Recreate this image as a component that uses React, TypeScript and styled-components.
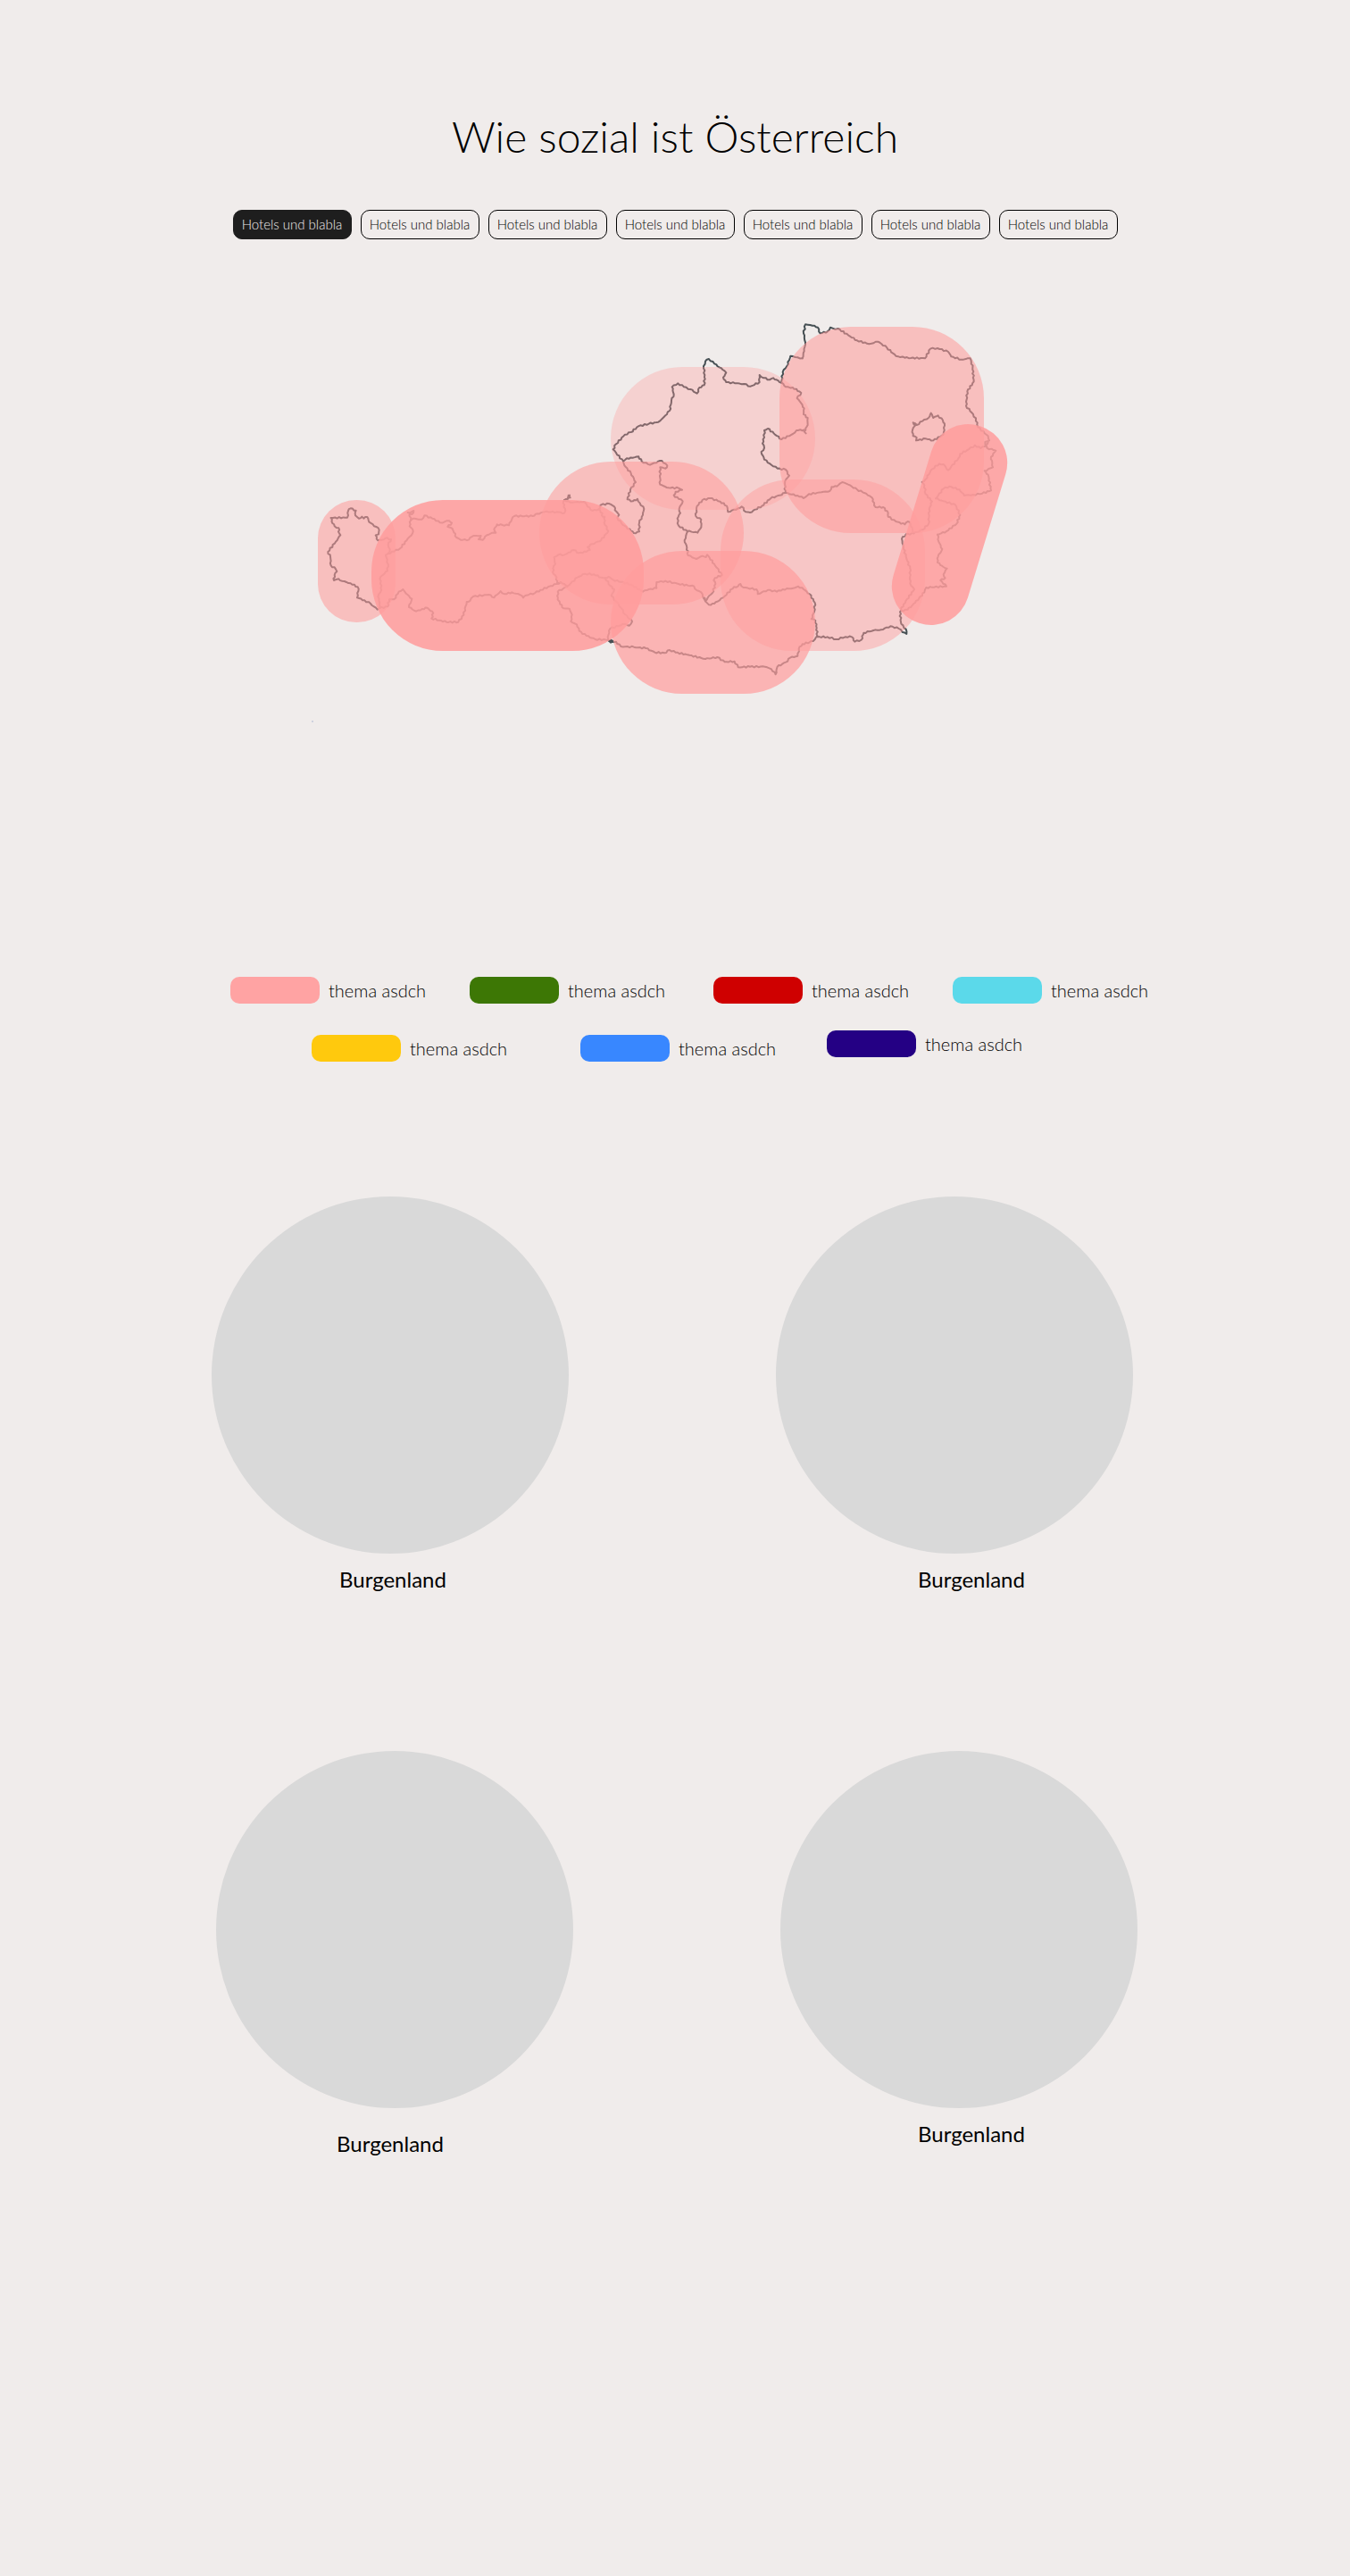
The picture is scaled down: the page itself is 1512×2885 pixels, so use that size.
import React, { useState } from "react";
import styled, { createGlobalStyle } from "styled-components";

const GlobalStyle = createGlobalStyle`
  *, *::before, *::after { box-sizing: border-box; }
  body {
    margin: 0;
    background: #f0eceb;
    color: #000;
    font-family: Lato, "Open Sans", sans-serif;
  }
`;

const Page = styled.main`
  display: flex;
  flex-direction: column;
  align-items: center;
  padding: 125px 24px 460px;
`;

const Title = styled.h1`
  margin: 0 0 54px;
  font-size: 48px;
  line-height: 56px;
  font-weight: 300;
  text-align: center;
`;

const Filters = styled.nav`
  display: flex;
  flex-wrap: wrap;
  justify-content: center;
  gap: 10px;
`;

const FilterButton = styled.button<{ $active: boolean }>`
  width: 133px;
  height: 33px;
  padding: 0 0 2px;
  border: 1px solid ${(p) => (p.$active ? "#1e1e1e" : "#000")};
  border-radius: 10px;
  background: ${(p) => (p.$active ? "#1e1e1e" : "transparent")};
  color: ${(p) => (p.$active ? "#f0eceb" : "#000")};
  font-family: inherit;
  font-size: 15px;
  font-weight: 300;
  line-height: 20px;
  white-space: nowrap;
  cursor: pointer;
`;

const MapFigure = styled.figure`
  width: 100%;
  max-width: 816px;
  margin: 92px 0 282px;

  svg {
    display: block;
    width: 100%;
    height: auto;
  }
`;

const Legend = styled.section`
  display: flex;
  flex-direction: column;
  gap: 30px;
`;

const LegendRow = styled.ul<{ $before?: number; $after?: number }>`
  display: flex;
  justify-content: center;
  align-items: flex-start;
  margin: 0;
  padding: 0 ${(p) => p.$after ?? 0}px 0 ${(p) => p.$before ?? 0}px;
  list-style: none;
`;

const LegendItem = styled.li<{ $gap: number; $drop: number }>`
  display: flex;
  align-items: center;
  gap: 10px;
  width: 218px;
  margin: ${(p) => p.$drop}px 0 0 ${(p) => p.$gap}px;
  font-size: 20px;
  font-weight: 300;
  line-height: 28px;
  white-space: nowrap;
`;

const Swatch = styled.span<{ $color: string }>`
  flex: none;
  width: 100px;
  height: 30px;
  border-radius: 10px;
  background: ${(p) => p.$color};
`;

const Charts = styled.section`
  display: flex;
  flex-direction: column;
  gap: 179px;
  margin-top: 151px;
`;

const ChartRow = styled.div<{ $before?: number; $after?: number }>`
  display: flex;
  justify-content: center;
  align-items: flex-start;
  gap: 232px;
  height: 442px;
  padding: 0 ${(p) => p.$after ?? 0}px 0 ${(p) => p.$before ?? 0}px;
`;

const Chart = styled.figure`
  width: 400px;
  margin: 0;
`;

const Disc = styled.div`
  aspect-ratio: 1;
  border-radius: 50%;
  background: #d9d9d9;
`;

const ChartName = styled.figcaption<{ $before: number; $after: number; $top: number }>`
  padding: ${(p) => p.$top}px ${(p) => p.$after}px 0 ${(p) => p.$before}px;
  font-size: 24px;
  line-height: 28px;
  text-align: center;
`;

const filters = Array.from({ length: 7 }, () => "Hotels und blabla");

const legend = [
  {
    before: 31,
    after: 0,
    items: [
      { color: "#ffa3a3", gap: 0, drop: 0 },
      { color: "#3d7705", gap: 50, drop: 0 },
      { color: "#cf0000", gap: 55, drop: 0 },
      { color: "#5bd9ea", gap: 50, drop: 0 },
    ],
  },
  {
    before: 0,
    after: 19,
    items: [
      { color: "#ffc90d", gap: 0, drop: 5 },
      { color: "#3887ff", gap: 83, drop: 5 },
      { color: "#240084", gap: 58, drop: 0 },
    ],
  },
];

const charts = [
  {
    before: 0,
    after: 6,
    items: [
      { name: "Burgenland", before: 6, after: 0, top: 15 },
      { name: "Burgenland", before: 38, after: 0, top: 15 },
    ],
  },
  {
    before: 4,
    after: 0,
    items: [
      { name: "Burgenland", before: 0, after: 10, top: 26 },
      { name: "Burgenland", before: 28, after: 0, top: 15 },
    ],
  },
];

/* Border lines, grouped by map sheet; each sheet is drawn at three times map scale. */
const sheets = [
  {
    x: 340,
    y: 540,
    lines: [
      "92,120 147,119 150,96 158,88 176,95 174,112 186,122 196,116 202,122 214,117 220,134 244,150 254,160 252,175 242,178 250,196 262,194 275,188 294,192 284,210 290,225 284,240 276,245 284,275 282,298 266,312 256,325 262,348 258,370 250,385 256,405 256,423",
      "92,120 97,138 104,148 118,154 120,172 124,178 108,200 82,234 90,250 92,280 108,292 112,300 104,312 102,330 118,325 130,332 158,340 182,352 184,366 180,388 205,397 225,408 248,428 256,423 282,418 288,394 304,394 320,368 334,360 344,374 364,392 354,420 378,434 398,426 416,422 436,440 430,458 456,464 480,470 520,470 538,446 548,402 560,398 570,384 622,378 640,388 662,366 676,376 700,370 726,378 738,388 748,380 778,372 796,362 850,342 864,336",
      "284,240 304,233 325,222 346,196 366,172 366,158 356,148 360,128 368,122 380,124 398,125 406,112 440,124 458,136 474,133 490,130 498,137 484,150 500,156 514,186 528,194 556,193 564,184 580,180 596,180 588,192 602,194 616,178 634,170 646,170 640,158 650,142 668,144 690,145 700,124 708,114 770,114 786,106 810,100 850,100 876,104 880,96 872,70 876,60 888,56 894,44",
      "350,102 362,100 370,96 364,108 356,106 360,128",
    ],
  },
  {
    x: 540,
    y: 480,
    lines: [
      "286,236 290,224 296,232 286,236",
      "276,240 296,248 320,246 346,248 354,262 372,276 390,272 400,256 426,252 444,262 446,274 460,290 454,300 468,318 500,344 516,352 528,346 528,316 540,290 544,270 530,250 522,236 506,244 488,238 498,205 516,180 500,150 478,124 474,110",
      "390,272 404,284 402,292 412,296 410,316 424,344 400,375 370,388 354,398 362,408 350,414 325,418 308,408 290,416 276,424 256,424 242,432 246,455 238,470 240,488 250,500 252,518 264,516 276,522 286,530",
      "286,530 254,548 254,575 262,590 274,604 294,606 302,625 298,648 318,658 326,680 350,696 380,708 422,710 436,716 450,716 466,732 510,734 550,738 580,752 612,754 630,744 650,752 690,760 750,774",
      "426,712 440,714 432,719 426,712",
      "286,530 320,500 345,488 376,490 400,500 414,502 430,528 444,540 434,562 450,580 468,604 480,624 504,648 494,662 480,656 430,672 422,700 424,710",
      "414,502 424,498 440,508 500,524 540,548 560,540 586,536 586,516 616,512 660,522 712,530 722,544 736,550 750,578",
    ],
  },
  {
    x: 660,
    y: 380,
    lines: [
      "114,410 80,370 90,352 120,320 140,312 165,292 200,284 232,278 250,262 270,240 276,206 284,184 278,160 298,148 318,160 340,168 362,182 370,162 386,154 388,120 384,90 390,74 402,66 420,82 448,102 460,112 450,128 460,144 490,148 520,150 542,158 572,144 572,120 586,130 606,136 618,130 646,146 650,110 664,90 676,56 692,60 716,64",
      "646,336 620,316 600,300 588,306 588,330 582,350 588,365 578,378 588,404 612,422 632,434 660,438 672,458 658,476 658,516",
      "658,516 640,524 610,534 580,560 540,582 526,580 512,562 500,568 466,580 462,560 440,545 406,534 380,540 362,560 358,594 376,606 376,632 364,650 330,644",
      "114,410 126,400 146,398 166,394 176,410 204,422 232,410 244,408 262,424 256,434 238,430 238,488 260,498 300,500 312,506 290,512 284,524 300,536 314,544 302,570 306,584 296,602 300,626 330,646",
    ],
  },
  {
    x: 860,
    y: 340,
    lines: [
      "46,266 60,280 84,282 112,300 98,318 112,335 122,352 120,372 134,384 134,408 122,430 128,436",
      "122,424 96,426 84,438 46,456",
      "58,636 100,645 120,654 138,640 180,634 208,630 214,616 232,614 250,600 270,608 300,625 330,638 350,652 352,664 362,684 388,684 404,704 404,716 430,732 460,742 470,732 480,740 490,772",
      "464,776 490,772 520,760 540,740 542,690 552,665 530,640 526,610 518,600 530,590 552,556 576,538 590,540 606,560 640,520 646,505 670,492 696,476 715,486 730,480 740,465",
      "116,184 122,160 126,130 120,100 126,70 150,74 168,80 176,100 200,94 210,80 225,86 236,84 270,106 300,124 340,136 370,128 400,148 430,176 460,182 528,184 546,152 570,150 606,162 616,178 650,188 680,184 688,215 692,262 670,295 666,344 690,372 704,400 706,415 740,445 744,460 730,465 736,485 766,494 750,515 756,550 728,562 740,575 750,628 720,638 690,642 660,645 644,625 610,614 590,622 564,655 590,664 630,676 646,710 634,740 600,765 570,776",
      "488,400 500,408 525,390 540,384 548,368 556,384 572,376 588,392 594,410 590,440 556,460 530,454 498,460 500,450 488,445 486,425 495,410 488,400",
    ],
  },
  {
    x: 760,
    y: 560,
    lines: [
      "30,106 20,135 28,160 32,186 60,198 80,188 92,192 96,184 120,215 146,252 122,262 118,270 124,282 114,312 98,328 90,340 84,330",
      "90,340 102,352 120,348 150,328 186,292 200,290 208,282 218,294 262,300 266,316 300,302 330,308 350,300 385,296 402,290 420,300 440,316 458,345 456,375 446,400 460,405 464,430 466,456",
      "90,534 130,528 155,544 188,542 200,562 240,560 290,560 312,568 326,586 332,560 360,545 375,530 400,524 404,500 416,484 440,478 452,474 466,456",
      "466,460 500,460 530,468 560,460 582,460 592,476 614,470 622,446 655,438 680,436 712,424 740,432 752,444 766,450 764,434 748,416 744,376 756,350 792,300 778,280 778,230 764,190 752,145 750,130 764,116",
      "870,116 874,140 886,165 872,190 870,210 890,225 902,230 890,250 896,262 880,270 900,290 832,294 826,310 795,345 770,368 748,372",
    ],
  },
];

function borderPath(line: string): string {
  const points = line.split(" ").map((pair) => pair.split(",").map(Number));
  let d = `M${points[0][0]} ${points[0][1]}`;
  for (let i = 1; i < points.length; i += 1) {
    const [ax, ay] = points[i - 1];
    const [bx, by] = points[i];
    const length = Math.hypot(bx - ax, by - ay);
    const steps = Math.max(1, Math.round(length / 7));
    for (let s = 1; s < steps; s += 1) {
      const t = s / steps;
      const swing = Math.sin((ax + by) * 1.7 + s * 2.6) * 2.4;
      const px = ax + (bx - ax) * t - ((by - ay) / length) * swing;
      const py = ay + (by - ay) * t + ((bx - ax) / length) * swing;
      d += `L${px.toFixed(1)} ${py.toFixed(1)}`;
    }
    d += `L${bx} ${by}`;
  }
  return d;
}

const regions = [
  { name: "Oberösterreich", x: 684, y: 411, w: 229, h: 160, r: 80, o: 0.33 },
  { name: "Niederösterreich", x: 873, y: 366, w: 229, h: 231, r: 80, o: 0.56 },
  { name: "Steiermark", x: 807, y: 537, w: 229, h: 192, r: 80, o: 0.48 },
  { name: "Salzburg", x: 604, y: 517, w: 229, h: 160, r: 80, o: 0.56 },
  { name: "Kärnten", x: 684, y: 617, w: 229, h: 160, r: 80, o: 0.7 },
  { name: "Vorarlberg", x: 356, y: 560, w: 87, h: 137, r: 43, o: 0.56 },
  { name: "Tirol", x: 416, y: 560, w: 305, h: 169, r: 80, o: 0.87 },
  { name: "Burgenland", x: 1020, y: 472, w: 87, h: 231, r: 43, o: 0.85, turn: 17 },
];

function AustriaMap() {
  return (
    <svg viewBox="348 360 816 452" role="img" aria-label="Österreich">
      {sheets.map((sheet) => (
        <g
          key={`${sheet.x}-${sheet.y}`}
          transform={`translate(${sheet.x} ${sheet.y}) scale(${1 / 3})`}
          fill="none"
          stroke="#465054"
          strokeWidth="6"
          strokeLinejoin="round"
          strokeLinecap="round"
        >
          {sheet.lines.map((line) => (
            <path key={line} d={borderPath(line)} />
          ))}
        </g>
      ))}
      <circle cx="350" cy="808" r="1" fill="#c3cadb" />
      {regions.map((g) => (
        <rect
          key={g.name}
          x={g.x}
          y={g.y}
          width={g.w}
          height={g.h}
          rx={g.r}
          fill="#ff9c9c"
          fillOpacity={g.o}
          transform={g.turn ? `rotate(${g.turn} ${g.x + g.w / 2} ${g.y + g.h / 2})` : undefined}
        />
      ))}
    </svg>
  );
}

export default function App() {
  const [active, setActive] = useState(0);
  return (
    <>
      <GlobalStyle />
      <Page>
        <Title>Wie sozial ist Österreich</Title>
        <Filters>
          {filters.map((label, i) => (
            <FilterButton
              key={i}
              type="button"
              $active={i === active}
              aria-pressed={i === active}
              onClick={() => setActive(i)}
            >
              {label}
            </FilterButton>
          ))}
        </Filters>
        <MapFigure>
          <AustriaMap />
        </MapFigure>
        <Legend>
          {legend.map((row, r) => (
            <LegendRow key={r} $before={row.before} $after={row.after}>
              {row.items.map((item) => (
                <LegendItem key={item.color} $gap={item.gap} $drop={item.drop}>
                  <Swatch $color={item.color} />
                  thema asdch
                </LegendItem>
              ))}
            </LegendRow>
          ))}
        </Legend>
        <Charts>
          {charts.map((row, r) => (
            <ChartRow key={r} $before={row.before} $after={row.after}>
              {row.items.map((item, i) => (
                <Chart key={i}>
                  <Disc />
                  <ChartName $before={item.before} $after={item.after} $top={item.top}>
                    {item.name}
                  </ChartName>
                </Chart>
              ))}
            </ChartRow>
          ))}
        </Charts>
      </Page>
    </>
  );
}
